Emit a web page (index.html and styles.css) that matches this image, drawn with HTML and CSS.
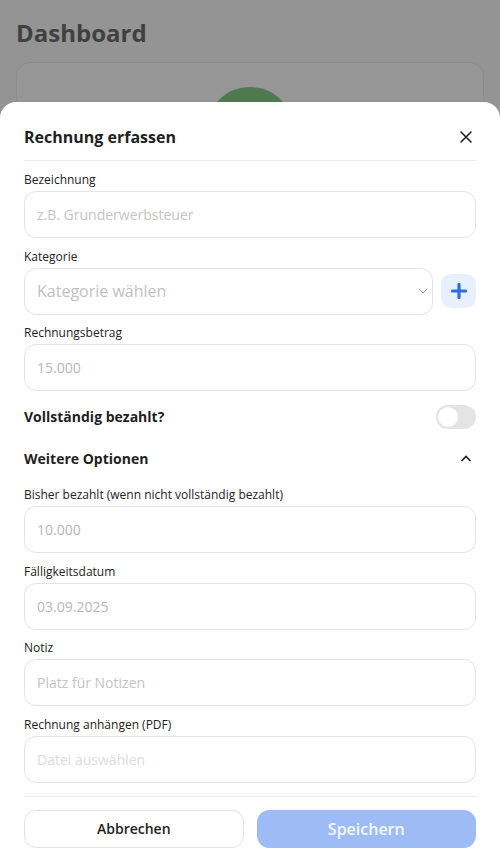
FILE: index.html
```html
<!DOCTYPE html>
<html lang="de">
<head>
<meta charset="utf-8">
<title>Rechnung erfassen</title>
<link rel="stylesheet" href="styles.css">
</head>
<body>
<main class="page">
  <h1 class="page-title">Dashboard</h1>
  <section class="card">
    <div class="avatar"></div>
  </section>
</main>

<div class="sheet">
  <header class="sheet-header">
    <h2 class="sheet-title">Rechnung erfassen</h2>
    <button class="icon-btn close" aria-label="Schließen">
      <svg width="14" height="14" viewBox="0 0 14 14"><path d="M2 2 L12 12 M12 2 L2 12" stroke="#1f1f1f" stroke-width="1.6" stroke-linecap="round" fill="none"/></svg>
    </button>
  </header>

  <form class="form">
    <div class="field">
      <label class="label">Bezeichnung</label>
      <input class="input" placeholder="z.B. Grunderwerbsteuer">
    </div>

    <div class="field">
      <label class="label">Kategorie</label>
      <div class="select-row">
        <div class="select-box">
          <span class="select-text">Kategorie wählen</span>
          <svg width="10" height="6" viewBox="0 0 10 6"><path d="M1 1 L5 5 L9 1" stroke="#9a9a9a" stroke-width="1" fill="none"/></svg>
        </div>
        <button type="button" class="add-btn" aria-label="Kategorie hinzufügen">
          <svg width="16" height="16" viewBox="0 0 16 16"><path d="M8 1.5 V14.5 M1.5 8 H14.5" stroke="#2c6ee0" stroke-width="3.2" stroke-linecap="round" fill="none"/></svg>
        </button>
      </div>
    </div>

    <div class="field">
      <label class="label">Rechnungsbetrag</label>
      <input class="input num" placeholder="15.000">
    </div>

    <div class="row switch-row">
      <span class="row-title">Vollständig bezahlt?</span>
      <span class="toggle"><span class="knob"></span></span>
    </div>

    <div class="row options-row">
      <span class="row-title">Weitere Optionen</span>
      <svg width="14" height="9" viewBox="0 0 14 9"><path d="M2.5 7 L7 2.5 L11.5 7" stroke="#1f1f1f" stroke-width="1.7" fill="none"/></svg>
    </div>

    <div class="field">
      <label class="label">Bisher bezahlt (wenn nicht vollständig bezahlt)</label>
      <input class="input num" placeholder="10.000">
    </div>

    <div class="field">
      <label class="label">Fälligkeitsdatum</label>
      <input class="input num" placeholder="03.09.2025">
    </div>

    <div class="field">
      <label class="label">Notiz</label>
      <input class="input" placeholder="Platz für Notizen">
    </div>

    <div class="field">
      <label class="label">Rechnung anhängen (PDF)</label>
      <div class="input file">Datei auswählen</div>
    </div>
  </form>

  <footer class="sheet-footer">
    <button type="button" class="btn btn-secondary">Abbrechen</button>
    <button type="button" class="btn btn-primary">Speichern</button>
  </footer>
</div>
</body>
</html>
```

FILE: styles.css
```css
* { box-sizing: border-box; }

html, body {
  margin: 0;
  height: 100%;
}

body {
  background: #949494;
  font-family: "Open Sans", "Noto Sans", sans-serif;
  color: #1f1f1f;
  overflow: hidden;
}

.page {
  padding: 17px 16px 0;
}

.page-title {
  margin: 0;
  font-size: 24px;
  line-height: 32px;
  font-weight: 700;
  color: #404040;
}

.card {
  margin-top: 13px;
  height: 400px;
  border: 1px solid #8c8c8c;
  border-radius: 14px;
  background: #969696;
  display: flex;
  justify-content: center;
  padding-top: 24px;
}

.avatar {
  width: 88px;
  height: 88px;
  border-radius: 50%;
  background: #4f7a50;
}

.sheet {
  position: fixed;
  left: 0;
  right: 0;
  top: 102px;
  bottom: 0;
  background: #fff;
  border-radius: 16px 16px 0 0;
  padding: 0 24px;
}

.sheet-header {
  display: flex;
  align-items: center;
  justify-content: space-between;
  padding: 23px 0 11px;
  border-bottom: 1px solid #ebebeb;
}

.sheet-title {
  margin: 0;
  font-size: 16px;
  line-height: 24px;
  font-weight: 700;
  color: #1f1f1f;
}

.icon-btn {
  border: 0;
  background: none;
  padding: 0;
  width: 24px;
  height: 24px;
  display: flex;
  align-items: center;
  justify-content: center;
  margin-right: -2px;
}

.form {
  display: flex;
  flex-direction: column;
  gap: 9.7px;
  padding-top: 10px;
}

.field {
  display: flex;
  flex-direction: column;
}

.label {
  font-size: 12px;
  line-height: 18px;
  margin-bottom: 2px;
  color: #222;
}

.input {
  height: 47px;
  width: 100%;
  border: 1px solid #e3e3e3;
  border-radius: 12px;
  padding: 0 12px;
  font-family: inherit;
  font-size: 14px;
  color: #222;
  background: #fff;
  outline: none;
}

.input::placeholder {
  color: #c4c4c4;
}

.input.num::placeholder {
  color: #b8b8b8;
}

.input.file {
  display: flex;
  align-items: center;
  color: #dcdcdc;
}

.select-row {
  display: flex;
  align-items: center;
  gap: 8px;
}

.select-box {
  flex: 1;
  height: 47px;
  border: 1px solid #e3e3e3;
  border-radius: 12px;
  padding: 0 4px 0 12px;
  display: flex;
  align-items: center;
  justify-content: space-between;
}

.select-text {
  font-size: 16px;
  color: #bfbfbf;
}

.add-btn {
  width: 35px;
  height: 34px;
  border: 0;
  border-radius: 10px;
  background: #e9f0fd;
  display: flex;
  align-items: center;
  justify-content: center;
  padding: 0;
}

.row {
  display: flex;
  align-items: center;
  justify-content: space-between;
  height: 28px;
}

.switch-row {
  margin-top: 1.5px;
}

.options-row {
  margin: 4px 0;
  padding-right: 3px;
}

.row-title {
  font-size: 14px;
  font-weight: 700;
  color: #1f1f1f;
}

.toggle {
  width: 40px;
  height: 24px;
  border-radius: 12px;
  background: #e4e4e4;
  display: flex;
  align-items: center;
  padding: 0 2px;
}

.knob {
  width: 20px;
  height: 20px;
  border-radius: 50%;
  background: #fff;
}

.sheet-footer {
  margin-top: 13px;
  border-top: 1px solid #ebebeb;
  padding-top: 13px;
  display: flex;
  gap: 13px;
}

.btn {
  flex: 1;
  height: 37.5px;
  border-radius: 12px;
  font-family: inherit;
  font-weight: 600;
}

.btn-secondary {
  background: #fff;
  border: 1px solid #e2e2e2;
  color: #1f1f1f;
  font-size: 14px;
}

.btn-primary {
  background: #9dbcf6;
  border: 1px solid #9dbcf6;
  color: #f4f7ff;
  font-size: 16px;
}
```
